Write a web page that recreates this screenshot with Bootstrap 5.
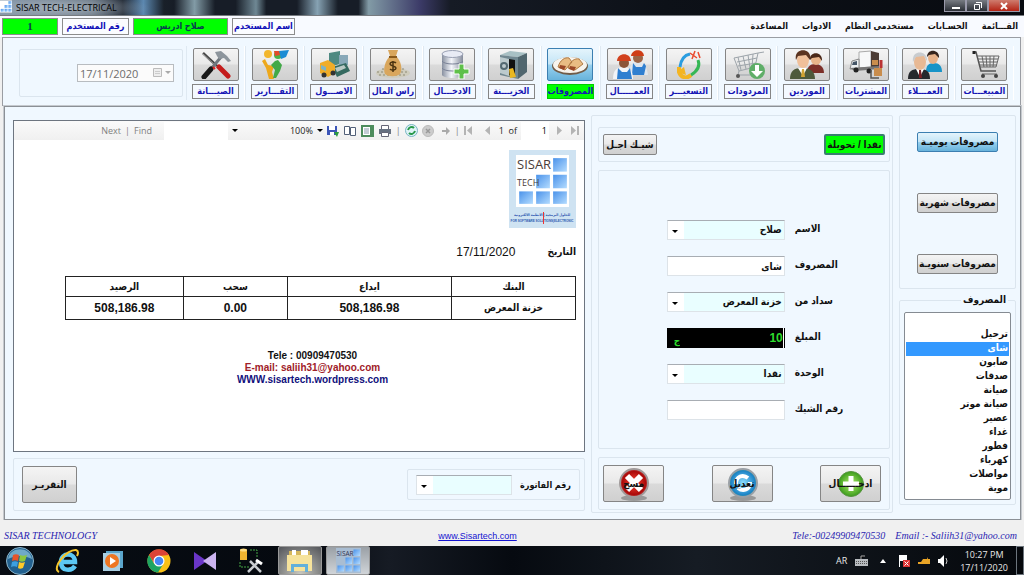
<!DOCTYPE html>
<html lang="ar">
<head>
<meta charset="utf-8">
<meta name="viewport" content="width=device-width, initial-scale=1">
<title>SISAR TECH-ELECTRICAL</title>
<link href="https://cdn.jsdelivr.net/npm/bootstrap@5.3.0/dist/css/bootstrap.min.css" rel="stylesheet">
<style>
body{font:bold 10px/14px "Liberation Sans","DejaVu Sans Condensed","DejaVu Sans",sans-serif;color:#111;background:#f0f0f0}
svg{display:block;flex:none}
.win-title{height:16px;font:11px/15px "Open Sans",sans-serif;color:#000;background:radial-gradient(ellipse 90px 14px at 60px 8px,#a9b4bfee,#a9b4bf00),linear-gradient(90deg,#8093a6 0,#5c6a78 9%,#1b222d 12%,#5c88b0 14%,#192029 16%,#171d27 17%,#829ba6 19%,#171d27 21%,#171d27 23%,#6f8894 25%,#171d27 26%,#171d27 29%,#86a2b3 31%,#171d27 33%,#171d27 35%,#829ba6 36%,#3c3b68 41%,#161b25 44%,#0d1118 65%,#080b10 100%);border-bottom:1px solid #777b80}
.win-ctl{height:12px;border:1px solid #99a;border-top:0;background:linear-gradient(#777b82,#2b2f36);padding:0;width:22px;display:grid;place-items:center}
.win-ctl.shut{width:32px;background:linear-gradient(#cf7c6e,#b32314)}
.menu-row{height:21px;background:#f8faff;padding:2px 6px 2px 2px}
.tag{height:17px;border:1px solid #8c8c8c;color:#1010b8;background:#fbfcff;font-size:9px;line-height:15px;text-align:center;white-space:nowrap}
.tag.on{background:#0f0;color:#0a3c50}
.tag.num{font:bold 11px/15px "Liberation Serif",serif}
.menu-row a{color:#111;text-decoration:none;font-size:9px;line-height:17px}
.menu-list{gap:14px}
.tools{background:#f0f8ff;border:1px solid #9a9da3;margin:0 3px 0 2px;height:69px;padding:8px 6px 5px 16px}
.etch{border:1px solid #dbe5ee;border-radius:2px}
.datebox{width:164px;margin:3px 3px 3px 0;flex:none;padding-right:8px}
.datebox input{width:97px;height:18px;border:1px solid #b8bcc0;background:#fbfbfb;color:#6d6d6d;font:11px "Open Sans",sans-serif;padding:0 2px}
.datebox .drop{position:absolute;right:3px;top:4px}
.tile{flex:1 1 0;min-width:0;padding-top:2px;border-left:1px solid #dfe9f2;border-right:1px solid #fff;text-align:center}
.face{border:1px solid #858585;border-radius:2px;background:linear-gradient(#f4f4f4,#e9e9e9 48%,#dadada 52%,#d0d0d0);padding:0;color:#111;font-weight:bold;font-size:10px;line-height:14px}
.face.on{background:linear-gradient(#e4f4fc,#c4e5f6 48%,#98d1ef 52%,#68b3db);border-color:#3c7fb1}
.tile .face{width:46px;height:33px;display:grid;place-items:center;margin:0 auto}
.tile .cap{width:47px;height:15px;font-size:9px;line-height:13px;border:1px solid #858585;color:#1414b4;background:#f4f9ff;margin:3px auto 0;white-space:nowrap;display:flex;justify-content:center}
.tile .cap.on{background:#0f0;border-color:#0c0}
.work{background:#f0f8ff;margin:0 3px 0 4px;border:1px solid #8b9096;box-shadow:0 0 0 1px #c5c9ce;padding:8px 4px 6px 8px;display:grid;grid-template-columns:572fr 302fr 117fr;gap:6px;flex:1 0 auto}
.left-col{padding:5px 0 2px;gap:6px}
.viewer{background:#fff;border:1px solid #6d7580}
.vbar{height:19px;background:linear-gradient(#fafafa,#f0f0f0);font:9px/18px "Open Sans",sans-serif;color:#222}
.vbar .dim{color:#808080}
.vbar input{border:0;background:#fff;height:18px;padding:0 2px;font:inherit}
.sheet{padding:10px 8px 0 51px}
.data{width:100%;table-layout:fixed;border-collapse:collapse;text-align:center}
.data th,.data td{border:1px solid #222;padding:0}
.data th{height:20px}.data td{height:23px;font-size:12px}
.data td.ar{font-size:10px}
.contact{font-size:10px;line-height:12px}
.face.rep{width:55px;height:37px}
.fld{height:20px;border:1px solid #dde3e8;border-top-color:#a8adb3;background-color:#fff;font:inherit;color:#111;padding:0 2px;border-radius:0;width:100%}
select.pick{appearance:none;background:url("data:image/svg+xml,%3Csvg xmlns='http://www.w3.org/2000/svg' width='6' height='4'%3E%3Cpath d='M0 0h6L3 3z'/%3E%3C/svg%3E") 4px 9px no-repeat,linear-gradient(90deg,#fff 16px,#e9feff 16px)}
.form-grid{display:grid;grid-template-columns:69fr 118px 10px 96fr;row-gap:16px;padding-top:49px}
.form-grid .fld,.form-grid .money{grid-column:2}
.form-grid label{grid-column:4;padding-top:2px}
.money{display:flex;background:#000;height:20px;padding:0 1px 0 7px;color:#2ddc2d}
.money input{background:#000;color:#2ddc2d;border:0;border-right:1px solid #fff;font:bold 12px "Liberation Sans";text-align:right;flex:1;min-width:0;padding:0}
.act{position:relative;width:61px;height:37px}
.act svg{position:absolute;left:13px;top:1px}
.act span{position:relative}
.kind{height:20px;width:81px}
.items{width:100%;height:188px;border:1px solid #858b92;background:#fff;font:inherit;padding:1px;overflow:hidden}
.items option{height:14px;min-height:14px;line-height:14px;padding:0 1px;color:#111;font-weight:bold}
.items option:checked{background:#3399ff linear-gradient(#3399ff,#3399ff);color:#fff;-webkit-text-fill-color:#fff}
legend{float:none;width:auto;font:inherit;margin:0 3px 0 auto;padding:0 2px}
.small-ar{font-size:9px}
.status{height:26px;font:italic 10px/14px "Liberation Serif",serif;color:#2a1fb0;padding:9px 7px 0 4px;background:#f0f0f0}
.status>*{flex:1 1 0}
.status a{color:#1414d0;font:9px/14px "Liberation Sans",sans-serif;flex:0 1 auto;padding-right:66px}
.task{height:29px;background:linear-gradient(90deg,#080d14,#05090f 30%,#161b24 38%,#060a10 50%,#161c24 68%,#05080c 100%);color:#e8e8e8;font:9px/13px "Open Sans",sans-serif}
.task .app{width:46px;height:29px;border:0;padding:0;background:none;display:grid;place-items:center}
.task .app.open{background:radial-gradient(circle at 50% 100%,#c9c9c0,#53555a);border:1px solid #999;border-radius:2px;width:44px}
.task .app.front{background:linear-gradient(#9aa0a6,#d0d4d8)}
</style>
</head>
<body>
<svg width="0" height="0" class="position-absolute" aria-hidden="true"><defs>
<linearGradient id="gb" x2="1" y2="1"><stop stop-color="#4a92ea"/><stop offset="1" stop-color="#b4dcff"/></linearGradient>
<linearGradient id="gm"><stop stop-color="#8890a0"/><stop offset=".45" stop-color="#f4f6fb"/><stop offset="1" stop-color="#858c9c"/></linearGradient>
<radialGradient id="gg"><stop stop-color="#b4f06a"/><stop offset="1" stop-color="#3c9c1c"/></radialGradient>
<radialGradient id="gr"><stop stop-color="#ff4a3a"/><stop offset="1" stop-color="#a80808"/></radialGradient>
<radialGradient id="gc"><stop stop-color="#8fe0ff"/><stop offset="1" stop-color="#1c84c8"/></radialGradient>
<g id="squares" fill="url(#gb)"><path d="M35 3h13v13H35z"/><path d="M19 19h13v13H19z"/><path d="M35 19h13v13H35z"/><path d="M3 35h13v12H3z"/><path d="M19 35h13v12H19z"/><path d="M35 35h13v12H35z"/></g>
<g id="tiles"><path fill="#fff" d="M0 0h50v50H0z"/><use href="#squares"/></g>
</defs></svg>
<div class="d-flex flex-column min-vh-100">
<header class="win-title d-flex justify-content-between">
  <div class="d-flex gap-1"><svg width="12" height="13" viewBox="0 0 50 50"><use href="#tiles"/></svg><span class="small-ar">SISAR TECH-ELECTRICAL</span></div>
  <div class="d-flex me-1">
    <button class="win-ctl" aria-label="Minimize"><svg width="9" height="8"><path fill="#fff" d="M1 5h8v2H1z"/></svg></button>
    <button class="win-ctl" aria-label="Restore"><svg width="9" height="8"><path fill="none" stroke="#fff" d="M1.500 2.500h5v5h-5zM3 .5h5.500V6"/></svg></button>
    <button class="win-ctl shut" aria-label="Close"><svg width="9" height="8"><path stroke="#fff" stroke-width="2" d="M1 1l6 6M7 1L1 7"/></svg></button>
  </div>
</header>
<nav class="menu-row d-flex justify-content-between">
  <div class="d-flex">
    <span class="tag on num" style="width:56px">1</span><span class="tag ms-1" style="width:67px">رقم المستخدم</span>
    <span class="tag on ms-1" style="width:95px">صلاح ادريس</span><span class="tag ms-1" style="width:63px">اسم المستخدم</span>
  </div>
  <div class="d-flex menu-list" dir="rtl"><a href="#">القـــائمة</a><a href="#">الحسـابات</a><a href="#">مستخدمى النظام</a><a href="#">الادوات</a><a href="#">المساعدة</a></div>
</nav>
<section class="tools d-flex">
  <div class="etch datebox d-flex align-items-center justify-content-end">
    <div class="position-relative"><input type="text" value="17/11/2020" aria-label="التاريخ" disabled><svg class="drop" width="18" height="10"><path fill="#eee" stroke="#bbb" d="M.5.5h8v8h-8z"/><path stroke="#ccc" d="M2 3.500h5M2 5.500h5"/><path fill="#aaa" d="M12 3h6l-3 3z"/></svg></div>
  </div>
  <div class="tile"><button class="face" aria-label="الصيانة"><svg width="38" height="29" viewBox="0 0 38 29"><path stroke="#444" stroke-width="2.500" d="M6 3l15 14"/><path stroke="#aaa" d="M5 3l15 14"/><path stroke="#c41c1c" stroke-width="5" stroke-linecap="round" d="M22 17l9 9"/><path stroke="#70777e" stroke-width="3" d="M24 7L14 19"/><path stroke="#181818" stroke-width="5" stroke-linecap="round" d="M14 19l-7 8"/><path stroke="#d22" stroke-width="2" d="M16 17l2 2"/><path fill="#8d959c" d="M18 2l6-1 6 5 4 5-3 1-4-4-5 1-2-3z"/></svg></button><div class="cap" dir="rtl">الصيـــانة</div></div>
  <div class="tile"><button class="face" aria-label="التقارير"><svg width="38" height="29" viewBox="0 0 38 29"><circle cx="12" cy="4" r="4" fill="#f2b62c"/><path fill="#eda81c" d="M9 9l3 6 6 1-2 6 2 7h-5l-3-11-4-7z"/><path fill="#42a948" d="M19 11l3-1 4 5-2 6-4 7h-3l2-8-4-5z"/><circle cx="22" cy="5" r="4" fill="#49b348"/><path fill="#1c8cd4" d="M23 1l10-1-3 7-5 2z"/><path fill="#e44a2a" d="M18 1h5l1 4-5 1z"/></svg></button><div class="cap" dir="rtl">التقـــارير</div></div>
  <div class="tile"><button class="face" aria-label="الاصول"><svg width="38" height="29" viewBox="0 0 38 29"><path fill="#4f8a82" d="M14 3l11-2v13l-11 3z"/><path fill="#88a8b8" d="M24 5h9v10h-9z"/><path fill="#356a60" d="M17 17l14-4 4 8-13 6z"/><path fill="#b9c8c4" d="M20 18l9-3 2 3-9 4z"/><path fill="#f0ad28" d="M5 13l8-3 7 5v8l-7 4-8-4z"/><path fill="#7fb4c4" d="M6 15l5 2v4l-5-2z"/><circle cx="9" cy="25" r="2.500" fill="#333"/><circle cx="18" cy="23" r="2.500" fill="#333"/></svg></button><div class="cap" dir="rtl">الاصـــول</div></div>
  <div class="tile"><button class="face" aria-label="راس المال"><svg width="38" height="29" viewBox="0 0 38 29"><ellipse cx="19" cy="23" rx="17" ry="5" fill="#cfccbc"/><path stroke="#8d8a74" stroke-dasharray="2 2" d="M3 22h32M5 25h28M8 19h22"/><path fill="#d9a65c" d="M14 0h10l-2 6c5 5 7 13 4 18-4 3-11 3-15 0-2-5 0-13 5-18z"/><path stroke="#8a5a1c" stroke-width="2" d="M15 7h8"/><path stroke="#4c3512" stroke-width="1.500" fill="none" d="M22 13c-2-2-6-1-6 1s6 2 6 4-4 3-6 1M19 11v11"/></svg></button><div class="cap" dir="rtl">راس المال</div></div>
  <div class="tile"><button class="face" aria-label="الادخال"><svg width="38" height="29" viewBox="0 0 38 29"><path fill="url(#gm)" d="M9 4h21v21c-2 4-19 4-21 0z"/><ellipse cx="19.500" cy="4" rx="10.500" ry="3.500" fill="#e8ebf5" stroke="#9aa1b4"/><path fill="none" stroke="#7b8398" d="M9 11c2 4 19 4 21 0M9 18c2 4 19 4 21 0"/><path fill="#5fc04a" stroke="#fff" d="M26 14h5v5h5v5h-5v5h-5v-5h-5v-5h5z"/></svg></button><div class="cap" dir="rtl">الادخـــال</div></div>
  <div class="tile"><button class="face" aria-label="الخزينة"><svg width="38" height="29" viewBox="0 0 38 29"><path fill="#a8c0c4" d="M8 5l10-4 17 2-9 4z"/><path fill="#51666e" d="M26 7l9-4v19l-9 7z"/><path fill="#718891" d="M8 5l18 2v22L8 25z"/><path fill="#111" d="M17 9l6 1v16l-6-1z"/><path fill="#bccacd" d="M8 7l9 2v17l-9-3z"/><circle cx="12" cy="16" r="3" fill="none" stroke="#546a72" stroke-width="2"/><path fill="#eab820" d="M17 19l4-1 3 9-6 1z"/></svg></button><div class="cap" dir="rtl">الخزيـــنة</div></div>
  <div class="tile"><button class="face on" aria-label="المصروفات"><svg width="38" height="29" viewBox="0 0 38 29"><ellipse cx="19" cy="16" rx="18" ry="9" fill="#715c48"/><ellipse cx="19" cy="15" rx="17" ry="8" fill="#f7f3ec"/><path fill="#e9bc83" stroke="#b07b45" d="M7 17c2-7 7-10 11-9l3 4-7 8zM17 18c2-7 7-10 11-9l4 5-8 6z"/><path fill="#9b4828" d="M9 15l6 1-2 4-5-2zM19 16l6 1-2 4-5-2z"/></svg></button><div class="cap on" dir="rtl">المصروفات</div></div>
  <div class="tile"><button class="face" aria-label="العمال"><svg width="38" height="29" viewBox="0 0 38 29"><path fill="#dfe6ee" d="M18 25c0-9 3-13 9-13s9 5 10 13z"/><circle cx="27" cy="8" r="5" fill="#9c6546"/><path fill="#cf3d16" d="M20 6c1-7 12-8 13 0z"/><path fill="#2f7fd0" d="M22 13l3 4h6l2-4 2 3-2 9H21z"/><path fill="#f2f4f7" d="M2 29c0-9 4-12 10-12s10 3 10 12z"/><circle cx="13" cy="13" r="5" fill="#8b5438"/><path fill="#d2401c" d="M6 11c0-8 13-10 14 0z"/><path fill="#2f7fd0" d="M7 18l4 4h5l3-4 2 11H6z"/></svg></button><div class="cap" dir="rtl">العمـــــال</div></div>
  <div class="tile"><button class="face" aria-label="التسعير"><svg width="38" height="29" viewBox="0 0 38 29"><g fill="none" stroke-width="4"><path stroke="#f4b522" d="M9 17v5c2 6 8 7 12 3"/><path stroke="#35b755" stroke-width="3" d="M21 25c8-5 9-10 7-15"/><path stroke="#2a9de0" stroke-width="3" d="M10 17C11 9 15 5 20 4"/><path stroke="#e94a2f" stroke-width="1.500" d="M20 3l7 5M25 1l-3 8M28 2l2 6"/></g><path fill="#f4b522" d="M7 22l7-5 2 8z"/></svg></button><div class="cap" dir="rtl">التسعيـــر</div></div>
  <div class="tile"><button class="face" aria-label="المردودات"><svg width="38" height="29" viewBox="0 0 38 29"><path fill="none" stroke="#9da4aa" d="M5 8l24-5-3 14-16 4zM8 12l20-4M9 16l18-3M9 7l3 13M14 6l3 13M19 5l2 13M24 4l-1 14M29 3l6-1M10 21l-1 4h18"/><circle cx="9" cy="26" r="2" fill="#555"/><circle cx="28" cy="21" r="8" fill="#5fae68"/><path fill="#fff" d="M26 15h4v6h4l-6 6-6-6h4z"/></svg></button><div class="cap" dir="rtl">المردودات</div></div>
  <div class="tile"><button class="face" aria-label="الموردين"><svg width="38" height="29" viewBox="0 0 38 29"><path fill="#7c2f28" d="M19 23c0-6 3-9 8-9s9 3 9 9z"/><circle cx="28" cy="10" r="5" fill="#e8b48a"/><path fill="#4a2818" d="M22 10c-1-9 13-9 12 1l-3-4-7 1z"/><path fill="#4e5a3c" d="M2 29c0-8 4-11 12-11s13 3 13 11z"/><path fill="#fff" d="M10 18l5 8 4-8z"/><path fill="#d3a433" d="M14 19h2l1 8h-4z"/><ellipse cx="15" cy="10" rx="6" ry="8" fill="#f0c09a"/><path fill="#5b331f" d="M8 10C5-3 25-3 22 10l-4-5-8 1z"/></svg></button><div class="cap" dir="rtl">الموردين</div></div>
  <div class="tile"><button class="face" aria-label="المشتريات"><svg width="38" height="29" viewBox="0 0 38 29"><path fill="#f7f8f9" stroke="#aaa" d="M12 2l12-1v16l-12 1z"/><path fill="#4c3c34" d="M24 1l8 2v14l-8 1z"/><path fill="#eceff1" stroke="#888" d="M5 11l7-2v10H3z"/><path fill="#456" d="M6 12l4-1v4H5z"/><path fill="#777" d="M3 18l29-2v3L8 21z"/><circle cx="9" cy="20" r="2.500" fill="#222"/><circle cx="22" cy="21" r="2.500" fill="#222"/><path fill="#c98d4d" d="M25 10h6v5h-6zM27 18h8v8h-8z"/><path stroke="#b33" stroke-width="3" d="M34 10v8"/><path fill="none" stroke="#555" stroke-width="1.500" d="M24 20v8h8"/></svg></button><div class="cap" dir="rtl">المشتريات</div></div>
  <div class="tile"><button class="face" aria-label="العملاء"><svg width="38" height="29" viewBox="0 0 38 29"><path fill="#1794c8" d="M20 22c0-7 3-9 8-9s8 3 8 9z"/><ellipse cx="27" cy="8" rx="5" ry="6" fill="#e6b188"/><path fill="#35241c" d="M21 7c0-9 13-8 12 1l-4-4-6 1z"/><path fill="#26282d" d="M2 29c0-8 4-10 11-10s11 2 11 10z"/><path fill="#fff" d="M10 19l4 8 4-8z"/><path fill="#7a1f25" d="M13 20h2l1 8h-3z"/><ellipse cx="14" cy="12" rx="6" ry="8" fill="#e8b994"/><path fill="#c9cccf" d="M7 12C5-1 22 0 21 11l-3-5-8 1z"/></svg></button><div class="cap" dir="rtl">العمـــلاء</div></div>
  <div class="tile"><button class="face" aria-label="المبيعات"><svg width="38" height="29" viewBox="0 0 38 29"><path fill="none" stroke="#555" stroke-width="1.500" d="M8 2h3l5 19h15"/><path fill="none" stroke="#666" d="M12 6h22l-3 11H15M13 9h20M14 12h18M15 15h17M17 6l2 11M21 6l1 11M25 6v11M29 6l-1 11M17 24h15"/><circle cx="18" cy="26" r="2" fill="#444"/><circle cx="31" cy="26" r="2" fill="#444"/><path stroke="#222" stroke-width="3" d="M9 1v3"/></svg></button><div class="cap" dir="rtl">المبيعـــات</div></div>
</section>
<main class="work">
  <div class="d-flex flex-column left-col">
    <section class="viewer flex-grow-1">
      <div class="vbar d-flex align-items-center justify-content-end gap-1 pe-1">
        <span class="dim">Next</span><span class="dim">|</span><span class="dim me-2">Find</span>
        <input type="text" style="width:64px" aria-label="Find text"><svg width="6" height="4"><path d="M0 0h6L3 3z"/></svg>
        <span class="ms-5">100%</span><svg width="6" height="4"><path d="M0 0h6L3 3z"/></svg>
        <svg width="12" height="12"><path fill="#3c55b8" d="M0 1h10v9H0z"/><path fill="#fff" d="M2 1h6v4H2zM3 7h4v3H3z"/><path fill="#2c9c3c" d="M7 7h5l-2 5z"/></svg>
        <svg width="14" height="12"><path fill="#fff" stroke="#526078" d="M1.500 1.500h5v8h-5zM7.500 2.500h5v8h-5z"/></svg>
        <svg width="13" height="12"><path fill="#4d8c5c" d="M0 0h13v12H0z"/><path fill="#fff" d="M2 2h7v8H2z"/><path stroke="#89a" d="M3 4h5M3 6h5M3 8h5"/></svg>
        <svg width="14" height="12"><path fill="#fff" stroke="#667" d="M3.500.5h7v4h-7z"/><path fill="#667080" d="M1 4h12v5H1z"/><path fill="#fff" stroke="#667" d="M3.500 7.500h7v4h-7z"/></svg>
        <span class="dim">|</span>
        <svg width="13" height="13"><circle cx="6.500" cy="6.500" r="6" fill="#dff3f6" stroke="#79b5c4"/><path fill="none" stroke="#28994a" stroke-width="2" d="M3 6c1-3 4-4 6-2M10 7c-1 3-4 4-6 2"/></svg>
        <svg width="12" height="12"><circle cx="6" cy="6" r="5.500" fill="#ccc" stroke="#bbb"/><path stroke="#999" stroke-width="1.500" d="M4 4l4 4M8 4l-4 4"/></svg>
        <svg class="ms-1" width="9" height="8"><path fill="#aaa" d="M0 3h4V0l4 4-4 4V5H0z"/></svg>
        <span class="dim">|</span>
        <svg width="9" height="9"><path fill="#b4b4b4" d="M0 0h2v9H0zM8 0v9L3 4.500z"/></svg>
        <svg class="ms-2" width="6" height="9"><path fill="#b4b4b4" d="M5 0v9L0 4.500z"/></svg>
        <span class="ms-1">1&nbsp; of</span><input type="text" value="1" class="text-end" style="width:28px" aria-label="Page">
        <svg class="ms-1" width="6" height="9"><path fill="#b4b4b4" d="M0 0v9l5-4.500z"/></svg>
        <svg class="ms-1" width="9" height="9"><path fill="#b4b4b4" d="M6 0h2v9H6zM0 0v9l5-4.500z"/></svg>
      </div>
      <div class="sheet">
        <div class="d-flex justify-content-end"><svg width="67" height="78" viewBox="0 0 67 78"><path fill="#cfe3f2" d="M0 0h67v78H0z"/><g transform="translate(7 5) scale(1.060 1.040)"><use href="#tiles"/></g><g font-family="Open Sans,sans-serif" font-weight="normal" fill="#4a3c38"><text x="8" y="19" font-size="13">SISAR</text><text x="8" y="36" font-size="9">TECH</text></g><g fill="#2d58b0" font-weight="bold"><text x="33" y="66" font-size="3.500" text-anchor="middle">للحلول البرمجية | الانظمة الالكترونية</text><text x="33" y="72" font-size="3" text-anchor="middle">FOR SOFTWARE SOLUTIONS|ELECTRONIC</text></g><path stroke="#e33" d="M34.500 62v12"/></svg></div>
        <div class="d-flex justify-content-end align-items-center" style="height:48px"><span class="fw-normal me-4" style="font-size:12px">17/11/2020</span><span class="ms-2" dir="rtl">التاريخ</span></div>
        <table class="data"><colgroup><col style="width:23.1%"><col style="width:20.4%"><col style="width:32.2%"><col style="width:24.3%"></colgroup>
          <thead><tr><th>الرصيد</th><th>سحب</th><th>ايداع</th><th>البنك</th></tr></thead>
          <tbody><tr><td>508,186.98</td><td>0.00</td><td>508,186.98</td><td class="ar">خزنة المعرض</td></tr></tbody></table>
        <div class="contact text-center pe-3" style="padding-top:30px"><div>Tele : 00909470530</div><div style="color:#a02028">E-mail: saliih31@yahoo.com</div><div style="color:#10107c">WWW.sisartech.wordpress.com</div></div>
      </div>
    </section>
    <section class="etch d-flex justify-content-between align-items-center px-1" style="height:53px">
      <button class="face rep ms-1" dir="rtl">التقريـر</button>
      <div class="etch d-flex align-items-center ps-2 pe-2 gap-2" style="height:31px"><select class="fld pick" id="inv" dir="rtl" style="width:96px"><option></option></select><label class="small-ar" for="inv" dir="rtl">رقم الفاتورة</label></div>
    </section>
  </div>
  <section class="etch d-flex flex-column" style="padding:11px 2px 2px 6px;gap:8px">
    <div class="etch d-flex justify-content-between align-items-center px-1" style="height:35px">
      <button class="face" dir="rtl" style="width:54px;height:21px">شيـك اجـل</button>
      <button class="face" dir="rtl" style="width:61px;height:21px;background:#0f0;border:2px solid #3a7f70">نقدا / تحويلة</button>
    </div>
    <form class="etch form-grid flex-grow-1 align-content-start" onsubmit="return false">
      <select class="fld pick" id="f1" dir="rtl"><option>صلاح</option></select><label for="f1">الاسم</label>
      <input class="fld" id="f2" dir="rtl" type="text" value="شاى"><label for="f2">المصروف</label>
      <select class="fld pick" id="f3" dir="rtl"><option>خزنة المعرض</option></select><label for="f3">سداد من</label>
      <div class="money"><span class="align-self-end">ج</span><input id="f4" type="text" value="10"></div><label for="f4">المبلغ</label>
      <select class="fld pick" id="f5" dir="rtl"><option>نقدا</option></select><label for="f5">الوحدة</label>
      <input class="fld" id="f6" dir="rtl" type="text"><label for="f6">رقم الشيك</label>
    </form>
    <div class="etch d-flex justify-content-between align-items-center ps-1 pe-2" style="height:53px">
      <button class="face act" dir="rtl"><svg width="34" height="34" viewBox="0 0 34 34"><ellipse cx="17" cy="31" rx="13" ry="3" fill="#999"/><circle cx="17" cy="16" r="14" fill="#b42020" stroke="#a09a9a" stroke-width="2"/><circle cx="17" cy="16" r="12" fill="url(#gr)"/><path stroke="#fff" stroke-width="6" d="M10 9l14 14M24 9L10 23"/></svg><span>مسح</span></button>
      <button class="face act" dir="rtl"><svg width="34" height="34" viewBox="0 0 34 34"><ellipse cx="17" cy="31" rx="13" ry="3" fill="#999"/><circle cx="17" cy="16" r="14" fill="#28b" stroke="#9aa0a6" stroke-width="2"/><circle cx="17" cy="16" r="12" fill="url(#gc)"/><path fill="none" stroke="#fff" stroke-width="4" d="M10 17c0-8 7-10 12-6M24 15c0 8-7 10-12 6"/></svg><span>تعديل</span></button>
      <button class="face act" dir="rtl"><svg width="34" height="34" viewBox="0 0 34 34"><circle cx="17" cy="17" r="12.500" fill="url(#gg)" stroke="#55933d"/><path stroke="#fff" stroke-width="5" d="M17 9v15M9 17h16"/></svg><span>ادخــــــال</span></button>
    </div>
  </section>
  <aside class="d-flex flex-column">
    <div class="etch d-flex flex-column align-items-center" style="height:174px;padding-top:16px;gap:41px">
      <button class="face on kind" dir="rtl">مصروفات يوميـة</button><button class="face kind" dir="rtl">مصروفات شهرية</button><button class="face kind" dir="rtl">مصروفات سنويـة</button>
    </div>
    <fieldset class="etch mt-1 px-1 pb-1" style="padding-top:5px"><legend dir="rtl"><label for="lst">المصروف</label></legend>
      <select class="items d-block" id="lst" size="13" dir="rtl"><option>&nbsp;</option><option>ترحيل</option><option selected>شاى</option><option>صابون</option><option>صدقات</option><option>صيانة</option><option>صيانة موتر</option><option>عصير</option><option>غداء</option><option>فطور</option><option>كهرباء</option><option>مواصلات</option><option>موية</option></select>
    </fieldset>
  </aside>
</main>
<footer class="status d-flex justify-content-between"><span>SISAR TECHNOLOGY</span><a href="#">www.Sisartech.com</a><span class="text-end">Tele:-00249909470530 &nbsp;&nbsp; Email :- Saliih31@yahoo.com</span></footer>
<div class="task d-flex justify-content-between">
  <div class="d-flex">
    <button class="app" aria-label="Start" style="width:40px"><svg width="28" height="28" viewBox="0 0 28 28"><circle cx="14" cy="14" r="13.500" fill="#23618f" stroke="#8db6cb"/><path fill="#6fa9c8" d="M2 12C4-1 24-1 26 12c-8-4-16-4-24 0z"/><path fill="#e8542a" d="M7 8c2-1 4-1 6 0l-1 6c-2-1-4-1-6 0z"/><path fill="#8cc63f" d="M14 8c2 1 4 1 7 0l-2 6c-2 1-4 1-6 0z"/><path fill="#3ea0e0" d="M6 15c2-1 4-1 6 0l-1 5c-2-1-4-1-6 0z"/><path fill="#ffca28" d="M13 15c2 1 4 1 6 0l-2 6c-2 1-4 1-5 0z"/></svg></button>
    <button class="app ms-1" aria-label="Internet Explorer"><svg width="24" height="26" viewBox="0 0 24 26"><path fill="none" stroke="#5cc8f4" stroke-width="4.500" d="M6 14h14c0-10-14-10-14 0s11 9 14 4"/><path fill="none" stroke="#f4c52c" stroke-width="2" d="M4 24C-4 20 12 1 21 2c3 1 2 4 1 6"/></svg></button>
    <button class="app" aria-label="Media Player"><svg width="20" height="20"><path fill="#5ba6cc" d="M3 0h17v17H3z"/><path fill="#a9cfe2" d="M0 2h17v18H0z"/><circle cx="9" cy="10" r="7" fill="#ee7622"/><path fill="#fff" d="M7 6l6 4-6 4z"/></svg></button>
    <button class="app" aria-label="Chrome"><svg width="24" height="24" viewBox="0 0 24 24"><circle cx="12" cy="12" r="11.500" fill="#fbc116"/><path fill="#dc4437" d="M2 6a11.500 11.500 0 0 1 20 0l-10 1-5 7z"/><path fill="#1da462" d="M2 6a11.500 11.500 0 0 0 9 17.500l5-8-9-1z"/><circle cx="12" cy="12" r="5.500" fill="#fff"/><circle cx="12" cy="12" r="4.300" fill="#4687f4"/></svg></button>
    <button class="app" aria-label="Visual Studio"><svg width="22" height="20"><path fill="#6a36c8" d="M0 1l13 9L0 19z"/><path fill="#cbb4f0" d="M22 1L9 10l13 9z"/></svg></button>
    <button class="app" aria-label="SQL tools"><svg width="25" height="26" viewBox="0 0 25 26"><path fill="#f2b430" d="M1 2h7v10H1z"/><ellipse cx="4.500" cy="2" rx="3.500" ry="1.500" fill="#ffdc80"/><path fill="none" stroke="#45a545" stroke-dasharray="2 1" d="M11 2h7v8M1 14v5h9"/><path stroke="#c8ccd0" stroke-width="2.500" d="M11 13l11 11M20 13L9 24"/><path stroke="#fff" stroke-width="3" d="M17 12l6 4"/></svg></button>
    <button class="app open ms-1" aria-label="Explorer"><svg width="26" height="24" viewBox="0 0 26 24"><path fill="#d5b75c" d="M2 2h21v20H2z"/><path fill="#fff" d="M5 1h4v5H5zM14 1h7v5h-7z"/><path fill="#f6e39c" d="M0 6h25v16H0z"/><path fill="#62b0da" d="M4 15h17v8h-3v-5H7v5H4z"/></svg></button>
    <button class="app open front ms-1" aria-label="SISAR"><svg width="25" height="25" viewBox="0 0 50 50"><path fill="#a9bdd2" d="M0 0h50v50H0z"/><use href="#squares"/><text x="1" y="16" font-size="13" fill="#335">SISAR</text></svg></button>
  </div>
  <div class="d-flex align-items-center gap-2">
    <span>AR</span><svg width="13" height="12"><path fill="#b8bcc0" d="M0 4h13v7H0z"/><path stroke="#555" stroke-dasharray="1 1" d="M1 6.500h11M1 8.500h11"/><path stroke="#aaa" d="M6 4V1h4"/></svg>
    <svg class="ms-1" width="6" height="4"><path fill="#fff" d="M0 4h6L3 0z"/></svg>
    <svg class="ms-1" width="12" height="14"><path fill="#fff" d="M1 1h8v6H2v6H1z"/><path fill="#d33" d="M5 6h7v7H5z"/><path stroke="#fff" d="M6.500 7.500l4 4m0-4l-4 4"/></svg>
    <svg width="12" height="10"><path fill="#e9a426" d="M0 6h3l2-3h4V1l1 2h2v5H5L3 8H0z"/></svg>
    <svg width="10" height="12"><path fill="#fff" d="M0 4h2l4-4v12L2 8H0z"/><path fill="none" stroke="#ccc" d="M8 3q2 3 0 6"/></svg>
    <div class="text-center ms-1">10:27 PM<br>17/11/2020</div><div class="border border-secondary align-self-stretch" style="width:8px"></div>
  </div>
</div>
</div>
</body>
</html>
